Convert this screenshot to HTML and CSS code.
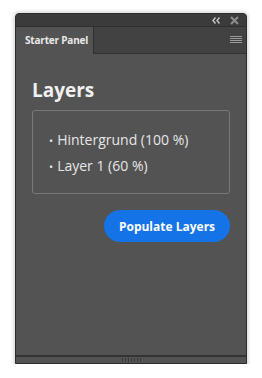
FILE: index.html
```html
<!DOCTYPE html>
<html lang="en">
<head>
   <meta charset="UTF-8">
   <meta name="viewport" content="width=device-width, initial-scale=1.0">
   <title>Starter Panel</title>
   <link rel="stylesheet" href="styles.css">
</head>
<body>
   <div class="panel">
      <div class="titlebar">
         <svg class="collapse" width="8" height="7" viewBox="0 0 8 7">
            <path d="M3.5 0.5 L1 3.5 L3.5 6.5 M7.5 0.5 L5 3.5 L7.5 6.5" stroke="#c8c8c8" stroke-width="1.4" fill="none"/>
         </svg>
         <svg class="close" width="9" height="9" viewBox="0 0 9 9">
            <path d="M1 1 L8 8 M8 1 L1 8" stroke="#8a8a8a" stroke-width="2.2"/>
         </svg>
      </div>
      <div class="tabbar">
         <div class="tab">Starter Panel</div>
         <svg class="menu" width="12" height="8" viewBox="0 0 12 8">
            <rect x="0" y="0" width="12" height="1" fill="#9a9a9a"/>
            <rect x="0" y="2" width="12" height="1" fill="#9a9a9a"/>
            <rect x="0" y="4" width="12" height="1" fill="#9a9a9a"/>
            <rect x="0" y="6" width="12" height="1" fill="#9a9a9a"/>
         </svg>
      </div>
      <div class="content">
         <h1>Layers</h1>
         <div class="layer-box">
            <ul>
               <li>Hintergrund (100 %)</li>
               <li>Layer 1 (60 %)</li>
            </ul>
         </div>
         <div class="actions">
            <button class="btn-populate">Populate Layers</button>
         </div>
      </div>
      <div class="footer">
         <div class="gripper"></div>
      </div>
   </div>
</body>
</html>
```

FILE: styles.css
```css
*{
   margin: 0;
   padding: 0;
   box-sizing: border-box;
}
body{
   background: #fff;
   font-family: "Open Sans", "Noto Sans", sans-serif;
}
.panel{
   width: 232px;
   height: 351px;
   margin: 13px 0 0 15px;
   display: flex;
   flex-direction: column;
   border: 1px solid #2c2c2c;
   border-radius: 4px 4px 0 0;
   box-shadow: 0 0 3px 2px rgba(0,0,0,0.12);
   background: #535353;
   overflow: hidden;
}
.titlebar{
   height: 12px;
   background: #3b3b3b;
   display: flex;
   justify-content: flex-end;
   align-items: center;
   gap: 10px;
   padding-right: 7px;
}
.tabbar{
   height: 28px;
   background: #424242;
   border-top: 1px solid #2f2f2f;
   border-bottom: 1px solid #333;
   display: flex;
   justify-content: space-between;
   align-items: center;
   padding-right: 4px;
}
.tab{
   width: 78px;
   height: 27px;
   background: #535353;
   border-right: 1px solid #2f2f2f;
   color: #e8e8e8;
   font-size: 10px;
   font-weight: bold;
   line-height: 27px;
   padding-left: 9px;
   white-space: nowrap;
   letter-spacing: -0.2px;
   align-self: flex-start;
}
.content{
   flex: 1;
   padding: 24px 17px 0 16px;
}
h1{
   color: #f0f0f0;
   font-size: 19px;
   font-weight: bold;
   line-height: 24px;
   margin-bottom: 8px;
}
.layer-box{
   width: 198px;
   border: 1px solid #787878;
   border-radius: 3px;
   padding: 16px 0 14px 16px;
}
.layer-box ul{
   list-style: none;
}
.layer-box li{
   color: #e6e6e6;
   font-size: 14px;
   line-height: 25px;
}
.layer-box li::before{
   content: "\2022";
   margin-right: 4px;
   font-size: 11px;
}
.actions{
   display: flex;
   justify-content: flex-end;
   width: 198px;
   margin-top: 16px;
}
.btn-populate{
   width: 126px;
   height: 32px;
   border: 0;
   border-radius: 16px;
   background: #1473e6;
   color: #fff;
   font-family: inherit;
   font-size: 12px;
   font-weight: bold;
}
.footer{
   height: 8px;
   border-top: 2px solid #333;
   background: #535353;
   display: flex;
   justify-content: center;
   align-items: center;
}
.gripper{
   width: 19px;
   height: 4px;
   background: repeating-linear-gradient(to right, #3a3a3a 0 1px, transparent 1px 3px);
}
```
